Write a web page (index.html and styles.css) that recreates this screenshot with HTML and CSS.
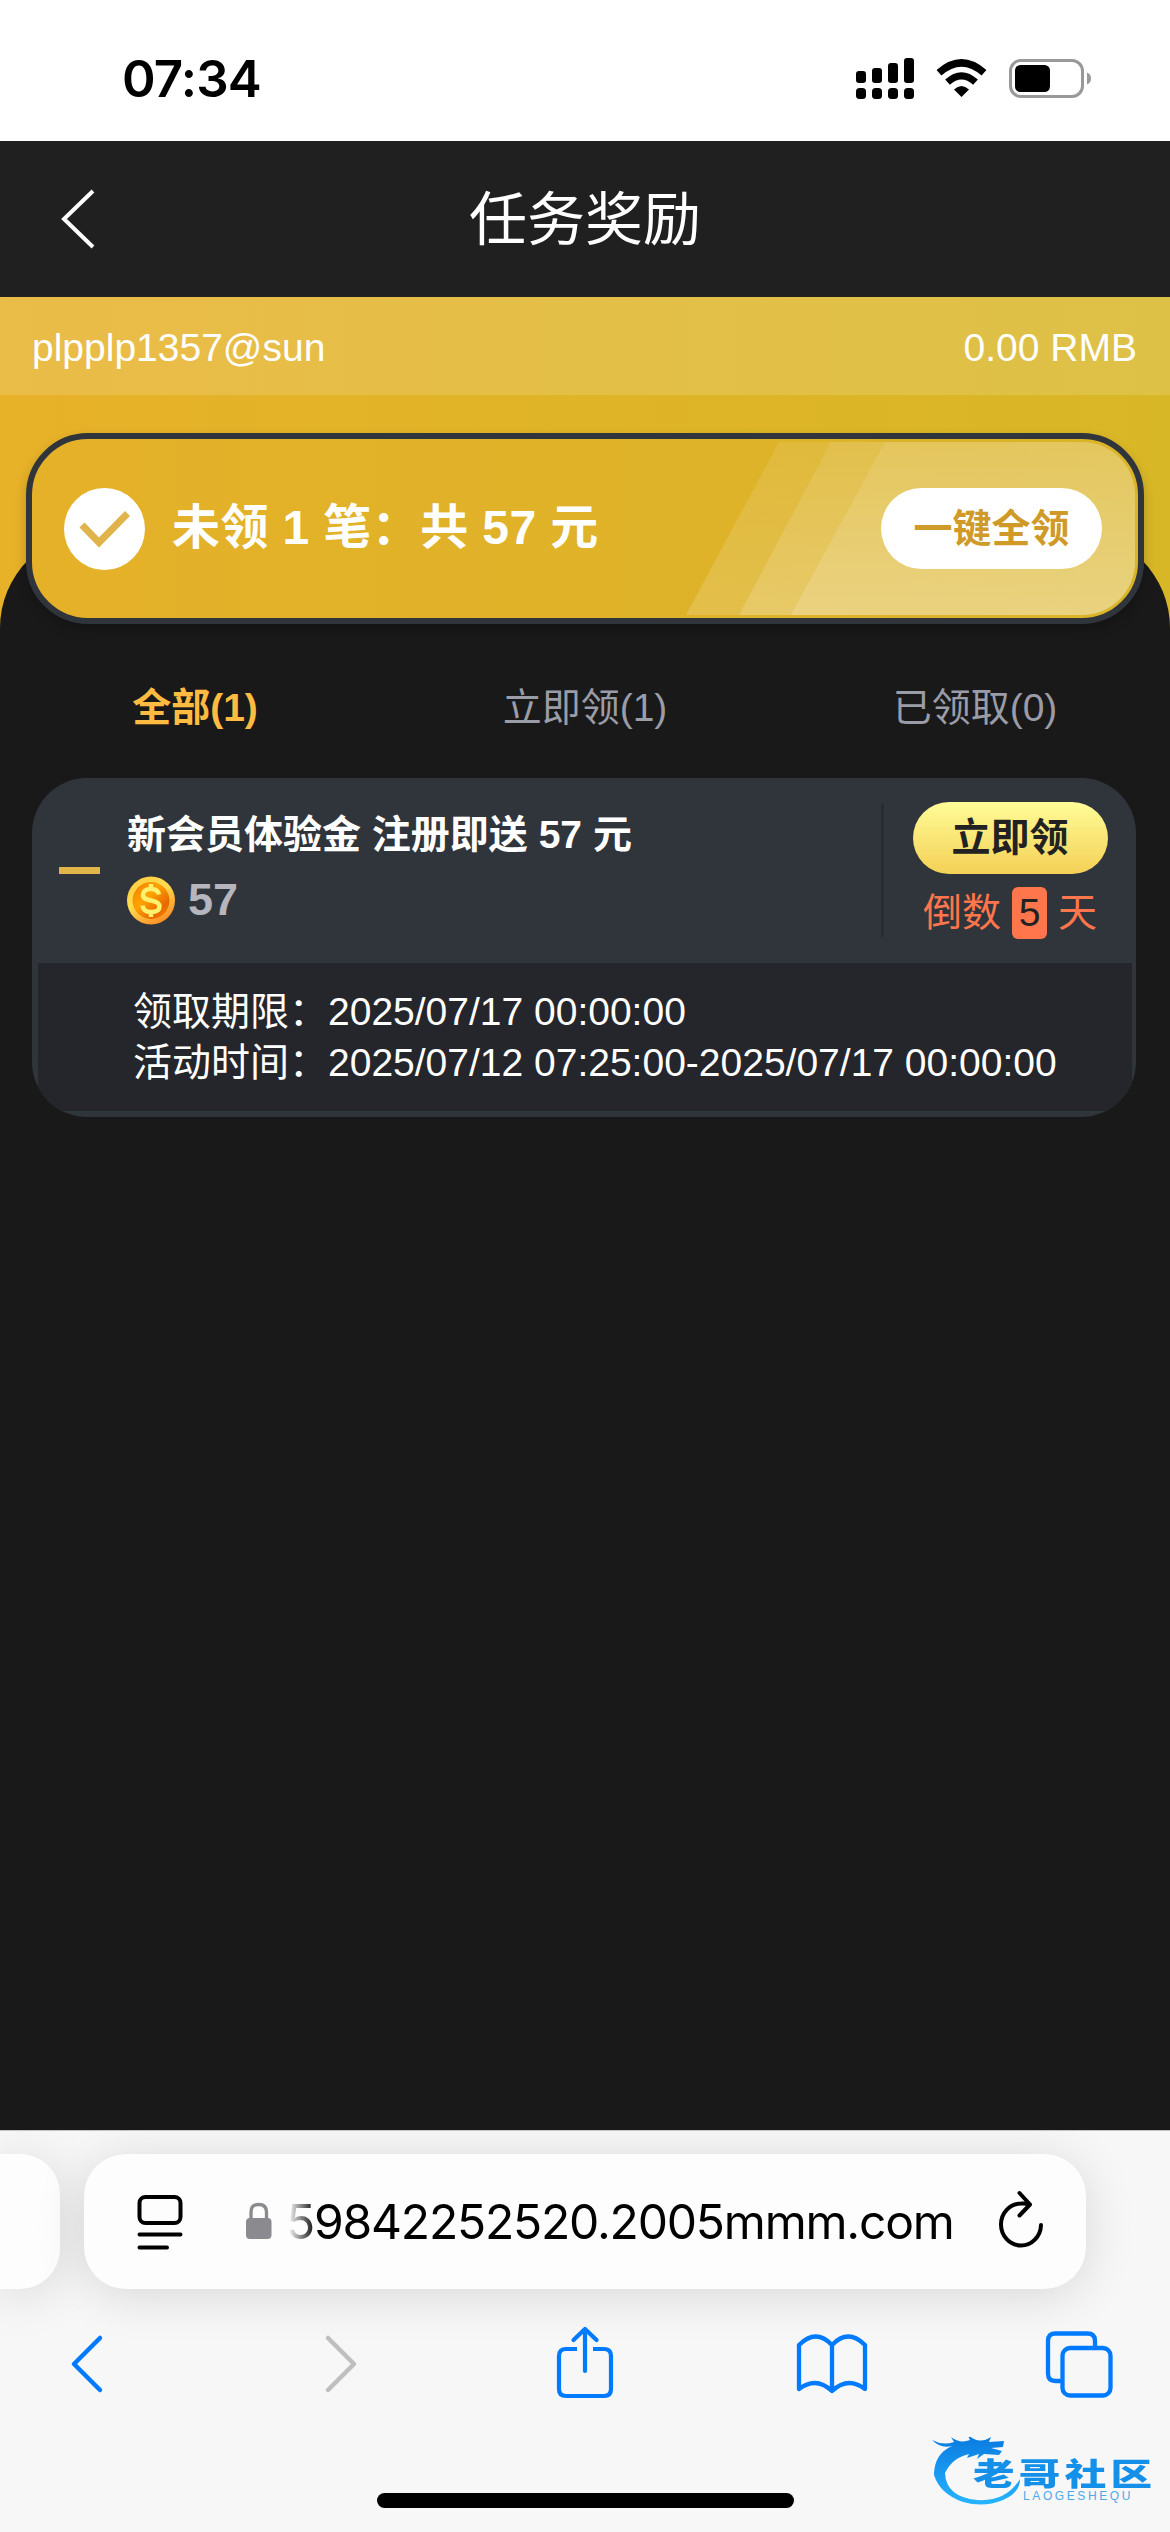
FILE: index.html
```html
<!DOCTYPE html>
<html lang="zh-CN">
<head>
<meta charset="utf-8">
<title>任务奖励</title>
<link rel="stylesheet" href="styles.css">
</head>
<body>
<div class="phone">
  <div class="status-bar">
    <span class="clock">07:34</span>
    <svg class="status-icons" width="240" height="50" viewBox="854 53 240 50">
      <g fill="#000">
        <rect x="856" y="70" width="10" height="12" rx="3"/><rect x="872" y="67" width="10" height="15" rx="3"/><rect x="888" y="62" width="10" height="20" rx="3"/><rect x="904" y="57" width="10" height="25" rx="3"/>
        <rect x="856" y="87" width="10" height="11" rx="3.5"/><rect x="872" y="87" width="10" height="11" rx="3.5"/><rect x="888" y="87" width="10" height="11" rx="3.5"/><rect x="904" y="87" width="10" height="11" rx="3.5"/>
        <path d="M961.5 96 L954 88.500 Q961.500 81.500 969 88.500 Z"/>
      </g>
      <path d="M939 71.800 Q961.500 52 984 71.800" fill="none" stroke="#000" stroke-width="7.300"/>
      <path d="M947.500 81.200 Q961.500 68.500 975.500 81.200" fill="none" stroke="#000" stroke-width="7"/>
      <rect x="1010.500" y="59.500" width="72" height="36" rx="10.500" fill="none" stroke="#999" stroke-width="3"/>
      <rect x="1015" y="64" width="35" height="27" rx="5.500"/>
      <path d="M1087 71.500 Q1091 73 1091 77.500 Q1091 82 1087 83.500 Z" fill="#999"/>
    </svg>
  </div>

  <header class="page-header">
    <svg class="back" width="40" height="64" viewBox="0 0 40 64"><path d="M35 4 L6 32 L35 60" fill="none" stroke="#fff" stroke-width="4"/></svg>
    <h1>任务奖励</h1>
    <span></span>
  </header>

  <main class="content">
    <section class="hero">
      <div class="account"><span>plpplp1357@sun</span><span>0.00 RMB</span></div>
    </section>
    <div class="sheet">
      <section class="summary">
        <svg class="stripes" width="449" height="173" viewBox="0 0 449 173">
          <defs><linearGradient id="sheen" x1="0" y1="0" x2="0" y2="1"><stop offset="0" stop-color="#fff" stop-opacity=".09"/><stop offset="1" stop-color="#fff" stop-opacity=".16"/></linearGradient></defs>
          <g fill="url(#sheen)"><path d="M93 0H449V173H0Z"/><path d="M145 0H449V173H53Z"/><path d="M199 0H449V173H105Z"/></g>
        </svg>
        <svg class="check" width="81" height="82" viewBox="0 0 81 82"><ellipse cx="40.500" cy="41" rx="40.500" ry="41" fill="#fff"/><path d="M18 37 L35 54.500 L63.500 25.500" fill="none" stroke="#e0b34b" stroke-width="7"/></svg>
        <strong class="summary-text">未领 1 笔：共 57 元</strong>
        <button class="claim-all">一键全领</button>
      </section>

      <nav class="tabs"><span class="tab active">全部(1)</span><span class="tab">立即领(1)</span><span class="tab">已领取(0)</span></nav>

      <article class="task">
        <div class="task-head">
          <span class="minus"></span>
          <div class="task-info">
            <h2>新会员体验金 注册即送 57 元</h2>
            <div class="reward">
              <svg width="48" height="49" viewBox="0 0 48 49">
                <defs>
                  <linearGradient id="rim" x1="0" y1="0" x2=".6" y2="1"><stop offset="0" stop-color="#ffc83c"/><stop offset=".5" stop-color="#ffdd50"/><stop offset="1" stop-color="#ff9226"/></linearGradient>
                  <linearGradient id="face" x1="0" y1="0" x2="1" y2="1"><stop offset="0" stop-color="#f07c00"/><stop offset=".4" stop-color="#fda400"/><stop offset=".75" stop-color="#e86800"/><stop offset="1" stop-color="#f58a00"/></linearGradient>
                </defs>
                <circle cx="24" cy="24.500" r="24" fill="url(#rim)"/><circle cx="24" cy="24.500" r="18.500" fill="url(#face)"/>
                <path d="M32 18.500 C31 14.500 28 13 24 13 C19 13 16 15.500 16 18.800 C16 22.500 19 23.500 24 24.500 C29.500 25.500 32.500 27 32.500 30.500 C32.500 34.300 29 36 24 36 C19 36 16 34 15.500 29.500 M24 8 V13 M24 36 V41" fill="none" stroke="#fff06e" stroke-width="4.500"/>
              </svg>
              <span>57</span>
            </div>
          </div>
          <div class="task-action">
            <button class="claim">立即领</button>
            <div class="countdown">倒数<span class="days">5</span>天</div>
          </div>
        </div>
        <div class="task-detail">
          <p>领取期限：2025/07/17 00:00:00</p>
          <p>活动时间：2025/07/12 07:25:00-2025/07/17 00:00:00</p>
        </div>
      </article>
    </div>
  </main>

  <footer class="browser">
    <div class="address-row">
      <div class="prev-tab"></div>
      <div class="address">
        <svg class="reader" width="46" height="56" viewBox="0 0 46 56" fill="none" stroke="#000" stroke-width="4" stroke-linecap="round"><rect x="2.500" y="3" width="41" height="26" rx="6"/><path d="M2.500 40.500H43.500M2.500 53.500H30"/></svg>
        <svg class="lock" width="26" height="38" viewBox="0 0 26 38"><rect y="16" width="25.500" height="21" rx="4" fill="#8a8a8f"/><path d="M5 17V10Q5 2.500 12.700 2.500T20.500 10V17" fill="none" stroke="#8a8a8f" stroke-width="3.300"/></svg>
        <span class="url">59842252520.2005mmm.com</span>
        <svg class="reload" width="46" height="58" viewBox="0 0 46 58" fill="none" stroke="#000" stroke-width="4" stroke-linecap="round" stroke-linejoin="round"><path d="M43 35A20 21 0 1 1 23 13.500Q28 13.200 32 14.500M21.500 3L32 14.500L21.500 25.500"/></svg>
      </div>
    </div>
    <div class="toolbar">
      <svg width="34" height="76" viewBox="0 0 34 76"><path d="M30 13L4 39L30 65" fill="none" stroke="#007aff" stroke-width="4.500" stroke-linecap="round" stroke-linejoin="round"/></svg>
      <svg width="34" height="76" viewBox="0 0 34 76"><path d="M4 13L30 39L4 65" fill="none" stroke="#bfbfbf" stroke-width="4.500" stroke-linecap="round" stroke-linejoin="round"/></svg>
      <svg width="58" height="76" viewBox="0 0 58 76" fill="none" stroke="#007aff" stroke-width="4.200" stroke-linecap="round" stroke-linejoin="round"><path stroke-linecap="butt" d="M21 24H10Q3 24 3 31V64Q3 71 10 71H48Q55 71 55 64V31Q55 24 48 24H37"/><path d="M29 46V4M17.500 15L29 4L40.500 15"/></svg>
      <svg width="72" height="76" viewBox="0 0 72 76" fill="none" stroke="#007aff" stroke-width="4.300" stroke-linecap="round" stroke-linejoin="round"><path d="M36 66Q20 51 3 64V20Q20 3 36 20Q52 3 69 20V64Q52 51 36 66V20"/></svg>
      <svg width="68" height="76" viewBox="0 0 68 76" fill="none" stroke="#007aff" stroke-width="4.300"><rect x="17.500" y="23" width="48" height="47.500" rx="7.500"/><path d="M50 21V16Q50 8.500 42.500 8.500H10.500Q3 8.500 3 16V48.500Q3 56 10.500 56H16"/></svg>
    </div>
    <div class="home-indicator"></div>
    <div class="watermark">
      <svg class="dragon" width="96" height="80" viewBox="928 2428 96 80">
        <defs><linearGradient id="wm" x1="0" y1="0" x2="0" y2="1"><stop offset="0" stop-color="#0a7be0"/><stop offset="1" stop-color="#26b5ff"/></linearGradient></defs>
        <path fill="url(#wm)" d="M932 2440Q943 2446 954 2442L951 2437Q960 2444 970 2440Q966 2434 974 2439Q982 2443 991 2437L989 2442L1004 2441L1003 2447L991 2448L1002 2451L999 2455L984 2454L977 2459L979 2454L967 2458L969 2454Q952 2458 945 2473Q946 2497 977 2500Q1006 2502 1020 2479Q1020 2493 1003 2500Q984 2508 963 2502Q940 2494 934 2475Q934 2454 952 2446Q941 2449 932 2440Z"/>
      </svg>
      <span class="wm-name">老哥社区</span>
      <span class="wm-latin">LAOGESHEQU</span>
    </div>
  </footer>
</div>
</body>
</html>
```

FILE: styles.css
```css
* { box-sizing: border-box; }
body { margin: 0; }
h1, h2, p { margin: 0; }
button { border: 0; padding: 0; font-family: inherit; }
svg { display: block; flex: none; }

.phone {
  width: 1170px;
  height: 2532px;
  display: flex;
  flex-direction: column;
  overflow: hidden;
  background: #191919;
  color: #fff;
  font-family: "Liberation Sans", "Noto Sans CJK SC", sans-serif;
  font-size: 39px;
}

.status-bar {
  height: 141px;
  flex: none;
  padding: 16px 76px 0 122px;
  display: flex;
  align-items: center;
  justify-content: space-between;
  background: #fff;
  color: #000;
}
.clock { font: 600 51px/60px Inter, sans-serif; letter-spacing: -.8px; }

.page-header {
  height: 156px;
  flex: none;
  padding: 0 58px;
  display: grid;
  grid-template-columns: 1fr auto 1fr;
  align-items: center;
  background: #202020;
}
.page-header h1 { font-size: 58px; font-weight: 400; line-height: 80px; padding-top: 2px; }

.content {
  flex: 1;
  display: flex;
  flex-direction: column;
  background: linear-gradient(90deg, #e7b128, #d8b726) 0 0 / 100% 340px no-repeat;
}
.hero { height: 235px; flex: none; }
.account {
  height: 98px;
  padding: 3px 33px 0 32px;
  display: flex;
  align-items: center;
  justify-content: space-between;
  background: rgba(255, 255, 255, .15);
  line-height: 45px;
}

.sheet {
  flex: 1;
  background: #191919;
  border-radius: 96px 96px 0 0;
}
.summary {
  position: relative;
  height: 191px;
  margin: -99px 26px 1px;
  padding: 0 36px 0 32px;
  display: flex;
  align-items: center;
  border: 6px solid #30353c;
  border-radius: 62px;
  background: linear-gradient(90deg, #e5b129, #dab428);
  box-shadow: 0 6px 12px rgba(0, 0, 0, .2);
}
.stripes {
  position: absolute;
  top: 3px;
  right: 3px;
  border-radius: 0 53px 53px 0;
}
.summary-text {
  flex: 1;
  margin-left: 27px;
  padding-bottom: 2px;
  font-size: 48px;
  line-height: 60px;
  letter-spacing: .4px;
}
.claim-all {
  position: relative;
  width: 221px;
  height: 81px;
  padding-bottom: 7px;
  border-radius: 41px;
  background: #fff;
  color: #cf9a27;
  font-size: 39px;
  font-weight: 700;
}

.tabs { display: grid; grid-template-columns: repeat(3, 1fr); height: 153px; padding-top: 53px; }
.tab { text-align: center; color: #9a9ca7; line-height: 60px; }
.tab.active { color: #fdbb41; font-weight: 700; }

.task {
  width: 1104px;
  margin-left: 32px;
  overflow: hidden;
  border-radius: 55px;
  background: #30343b;
}
.task-head { height: 185px; display: flex; }
.minus { width: 41px; height: 7px; margin: 89px 27px 0; background: #e2b54b; }
.task-info { flex: 1; padding-top: 28px; }
.task-info h2 { font-size: 39px; line-height: 58px; white-space: nowrap; }
.reward {
  margin-top: 12px;
  display: flex;
  align-items: center;
  gap: 13px;
  color: #b5b5bd;
  font-size: 45px;
  font-weight: 700;
  line-height: 50px;
}
.reward span { margin-top: -2px; }
.task-action {
  width: 255px;
  height: 133px;
  margin-top: 26px;
  border-left: 3px solid #282b31;
  display: flex;
  flex-direction: column;
  align-items: center;
}
.claim {
  width: 195px;
  height: 72px;
  flex: none;
  margin-top: -2px;
  padding-bottom: 9px;
  border-radius: 36px;
  background: linear-gradient(#fffc97, #f4d056);
  color: #222;
  font-size: 39px;
  font-weight: 700;
}
.countdown {
  margin-top: 13px;
  display: flex;
  align-items: center;
  gap: 11px;
  color: #ff764c;
  line-height: 52px;
}
.days { width: 35px; border-radius: 6px; background: #ff764c; color: #222; text-align: center; }
.task-detail {
  height: 148px;
  margin: 0 4px 6px 6px;
  padding: 23px 0 0 95px;
  background: #25262b;
}
.task-detail p { line-height: 51px; white-space: nowrap; }

.browser {
  position: relative;
  height: 402px;
  flex: none;
  overflow: hidden;
  border-top: 1px solid #c4c4c6;
  background: #f7f7f7;
}
.address-row { display: flex; gap: 24px; padding-top: 23px; }
.prev-tab, .address {
  height: 135px;
  background: #fdfdfd;
  box-shadow: 0 6px 50px rgba(0, 0, 0, .13);
}
.prev-tab { width: 60px; border-radius: 0 40px 40px 0; }
.address {
  width: 1002px;
  padding: 0 42px 0 53px;
  display: flex;
  align-items: center;
  border-radius: 42px;
}
.lock { margin: -2px 14px 0 63px; }
.url {
  width: 676px;
  margin-right: 37px;
  color: #000;
  font: 400 48px/64px Inter, sans-serif;
  letter-spacing: -1.2px;
  white-space: nowrap;
  mask-image: linear-gradient(90deg, transparent 2px, #000 30px);
}
.reload { margin-top: -6px; }
.toolbar {
  padding: 36px 0 0 70px;
  display: grid;
  grid-template-columns: 254px 232px 240px 249px 68px;
  align-items: center;
}
.home-indicator {
  position: absolute;
  left: 377px;
  top: 362px;
  width: 417px;
  height: 15px;
  border-radius: 8px;
  background: #000;
}
.watermark { position: absolute; left: 928px; top: 297px; width: 230px; height: 80px; }
.wm-name {
  position: absolute;
  left: 45px;
  top: 29px;
  font: 900 31px/30px "Noto Sans CJK SC", sans-serif;
  letter-spacing: 3.2px;
  white-space: nowrap;
  transform: scaleX(1.34);
  transform-origin: left;
  color: #1590e8;
}
.wm-latin {
  position: absolute;
  left: 95px;
  top: 62px;
  color: #4da9e6;
  font-size: 12px;
  line-height: 12px;
  letter-spacing: 2.6px;
}
```
